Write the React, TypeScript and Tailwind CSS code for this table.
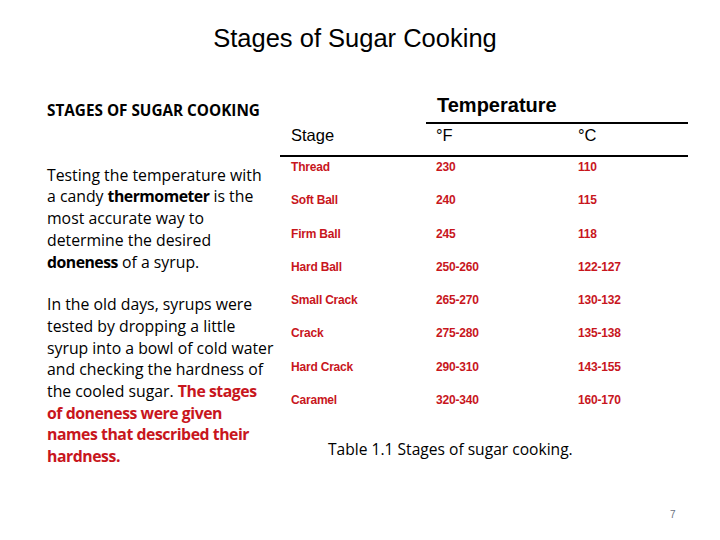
import React from 'react';

const rows = [
  ['Thread', '230', '110'],
  ['Soft Ball', '240', '115'],
  ['Firm Ball', '245', '118'],
  ['Hard Ball', '250-260', '122-127'],
  ['Small Crack', '265-270', '130-132'],
  ['Crack', '275-280', '135-138'],
  ['Hard Crack', '290-310', '143-155'],
  ['Caramel', '320-340', '160-170'],
];

const body = "font-['Open_Sans','Lato',sans-serif]";
const arial = "font-['Liberation_Sans',Arial,sans-serif]";

export default function App() {
  return (
    <div className="relative w-[720px] h-[540px] bg-white text-black overflow-hidden">
      <h1 className={`${arial} text-[25.5px] text-center pt-[23px] pr-[10px] leading-[30px]`}>Stages of Sugar Cooking</h1>

      <div className="flex mt-[36px]">
        {/* left text column */}
        <div className={`${body} w-[233px] ml-[47px] text-[15.8px] leading-[21.7px]`}>
          <p className="font-bold text-[15.3px] mt-[11px]">STAGES OF SUGAR COOKING</p>
          <p className="mt-[43px]">
            Testing the temperature with<br />
            a candy <b className="tracking-[-0.5px]">thermometer</b> is the<br />
            most accurate way to<br />
            determine the desired<br />
            <b className="tracking-[-0.5px]">doneness</b> of a syrup.
          </p>
          <p className="mt-[21px]">
            In the old days, syrups were<br />
            tested by dropping a little<br />
            syrup into a bowl of cold water<br />
            and checking the hardness of<br />
            the cooled sugar.{' '}
            <b className="text-[#c8161d] tracking-[-0.45px]">
              The stages<br />
              of doneness were given<br />
              names that described their<br />
              hardness.
            </b>
          </p>
        </div>

        {/* table column */}
        <div className={`${arial} w-[408px]`}>
          <div className="pl-[146px]">
            <p className="font-bold text-[20px] leading-[24px] pl-[11px] mt-[4px]">Temperature</p>
            <div className="h-[2px] bg-black mt-[5px]" />
          </div>
          <div className="grid grid-cols-[145px_142px_1fr] pl-[11px] text-[16.5px] leading-[18px] h-[31px] pt-[2px]">
            <span>Stage</span>
            <span>°F</span>
            <span>°C</span>
          </div>
          <div className="h-[2px] bg-black" />
          <div className="text-[12px] leading-[18px] font-bold text-[#c8161d] mt-px">
            {rows.map((r) => (
              <div key={r[0]} className="grid grid-cols-[145px_142px_1fr] pl-[11px] h-[33.3px] tracking-[-0.2px]">
                <span>{r[0]}</span>
                <span>{r[1]}</span>
                <span>{r[2]}</span>
              </div>
            ))}
          </div>
          <p className={`${body} text-[15.6px] leading-[22px] mt-[14px] pl-[48px]`}>Table 1.1 Stages of sugar cooking.</p>
        </div>
      </div>

      <span className={`${arial} absolute left-[670px] top-[507px] text-[10px] text-gray-500`}>7</span>
    </div>
  );
}
